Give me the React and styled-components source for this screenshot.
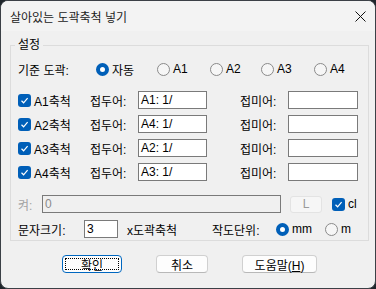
import React from 'react';
import styled, { createGlobalStyle } from 'styled-components';

const Global = createGlobalStyle`
  html, body { margin: 0; padding: 0; background: #1f252b; }
  body { width: 376px; height: 289px; overflow: hidden; }
  * { box-sizing: border-box; }
`;

const Window = styled.div`
  width: 376px;
  height: 289px;
  background: #f0f0f0;
  border: 1px solid #3b4046;
  border-radius: 8px;
  overflow: hidden;
  display: flex;
  flex-direction: column;
  font-family: "Liberation Sans", "Noto Sans CJK KR", sans-serif;
  font-size: 12px;
  color: #000;
`;

const TitleBar = styled.div`
  height: 30px;
  flex: none;
  background: #f3f3f3;
  display: flex;
  align-items: center;
  justify-content: space-between;
  padding: 0 9px 0 9px;
  color: #1a1a1a;
  font-size: 12px;
`;

const CloseBtn = styled.div`
  width: 12px;
  height: 12px;
  display: flex;
  align-items: center;
  justify-content: center;
`;

const Body = styled.div`
  padding: 7px 6px 0 9px;
  display: flex;
  flex-direction: column;
`;

const Group = styled.fieldset`
  margin: 0;
  padding: 0 0 1px 4px;
  border: 1px solid #dcdcdc;
  min-width: 0;
`;

const Legend = styled.legend`
  padding: 0 3px;
  line-height: 14px;
  font-size: 12px;
`;

const Content = styled.div`
  padding-left: 3px;
  display: flex;
  flex-direction: column;
`;

const RadioRow = styled.div`
  display: grid;
  grid-template-columns: 78px 61px 53px 51px 53px auto;
  align-items: center;
  height: 20px;
  margin-top: 7px;
`;

const CheckRows = styled.div`
  margin-top: 9px;
  display: flex;
  flex-direction: column;
`;

const CheckRow = styled.div`
  display: grid;
  grid-template-columns: 72px 48px 69px 33px 48px 70px;
  align-items: center;
  height: 24px;
`;

const Label = styled.span`
  white-space: nowrap;
  color: ${p => (p.$disabled ? '#a3a3a3' : '#000')};
`;

const Option = styled.label`
  display: flex;
  align-items: center;
  gap: 3px;
  white-space: nowrap;
`;

const RadioCircle = styled.span`
  flex: none;
  width: 13px;
  height: 13px;
  border-radius: 50%;
  background: ${p => (p.$checked ? '#fff' : '#f6f6f6')};
  border: ${p => (p.$checked ? '4px solid #005fb8' : '1px solid #8a8a8a')};
`;

const Box = styled.span`
  flex: none;
  width: 13px;
  height: 13px;
  border-radius: 3px;
  background: #005fb8;
  display: flex;
  align-items: center;
  justify-content: center;
`;

const Input = styled.div`
  height: 18px;
  width: ${p => p.$w}px;
  border: 1px solid #7a7a7a;
  background: ${p => (p.$disabled ? '#f0f0f0' : '#fff')};
  color: ${p => (p.$disabled ? '#8a8a8a' : '#000')};
  padding-left: 2px;
  line-height: 16px;
  font-size: 12px;
  white-space: nowrap;
`;

const FlexRow = styled.div`
  display: flex;
  align-items: center;
  height: 20px;
  margin-top: ${p => p.$mt}px;
`;

const Cell = styled.div`
  flex: none;
  width: ${p => p.$w}px;
  display: flex;
  align-items: center;
`;

const SmallButton = styled.div`
  width: 32px;
  height: 17px;
  border: 1px solid #e3e3e3;
  border-radius: 3px;
  background: #f6f6f6;
  color: #9a9a9a;
  display: flex;
  align-items: center;
  justify-content: center;
  font-size: 12px;
`;

const ButtonRow = styled.div`
  display: flex;
  gap: 34px;
  margin: 14px 0 0 52px;
`;

const Button = styled.div`
  position: relative;
  width: ${p => p.$w}px;
  height: 18px;
  border-radius: 4px;
  background: #fdfdfd;
  border: 1px solid ${p => (p.$focus ? '#0067c0' : '#d0d0d0')};
  border-bottom-color: ${p => (p.$focus ? '#0067c0' : '#b8b8b8')};
  display: flex;
  align-items: center;
  justify-content: center;
  font-size: 12px;
  color: #000;
`;

const FocusRing = styled.span`
  position: absolute;
  inset: 2px;
  border: 1px dotted #000;
  pointer-events: none;
`;

const U = styled.span`
  text-decoration: underline;
`;

const Check = () => (
  <Box>
    <svg width="9" height="9" viewBox="0 0 9 9">
      <path d="M1.5 4.8 L3.6 6.8 L7.6 2.2" fill="none" stroke="#fff" strokeWidth="1.2" />
    </svg>
  </Box>
);

const Radio = ({ checked, children }) => (
  <Option>
    <RadioCircle $checked={checked} />
    <span>{children}</span>
  </Option>
);

const scaleRows = [
  ['A1축척', 'A1: 1/'],
  ['A2축척', 'A4: 1/'],
  ['A3축척', 'A2: 1/'],
  ['A4축척', 'A3: 1/'],
];

export default function App() {
  return (
    <>
      <Global />
      <Window>
        <TitleBar>
          <span>살아있는 도곽축척 넣기</span>
          <CloseBtn>
            <svg width="11" height="11" viewBox="0 0 11 11">
              <path d="M0.5 0.5 L10.5 10.5 M10.5 0.5 L0.5 10.5" stroke="#111" strokeWidth="1" />
            </svg>
          </CloseBtn>
        </TitleBar>
        <Body>
          <Group>
            <Legend>설정</Legend>
            <Content>
              <RadioRow>
                <Label>기준 도곽:</Label>
                <Radio checked>자동</Radio>
                <Radio>A1</Radio>
                <Radio>A2</Radio>
                <Radio>A3</Radio>
                <Radio>A4</Radio>
              </RadioRow>
              <CheckRows>
                {scaleRows.map(([name, prefix]) => (
                  <CheckRow key={name}>
                    <Option>
                      <Check />
                      <span>{name}</span>
                    </Option>
                    <Label>접두어:</Label>
                    <Input $w={69}>{prefix}</Input>
                    <span />
                    <Label>접미어:</Label>
                    <Input $w={70} />
                  </CheckRow>
                ))}
              </CheckRows>
              <FlexRow $mt={10}>
                <Cell $w={24}>
                  <Label $disabled>켜:</Label>
                </Cell>
                <Cell $w={248}>
                  <Input $w={239} $disabled>0</Input>
                </Cell>
                <Cell $w={42}>
                  <SmallButton>L</SmallButton>
                </Cell>
                <Option>
                  <Check />
                  <span>cl</span>
                </Option>
              </FlexRow>
              <FlexRow $mt={5}>
                <Cell $w={66}>
                  <Label>문자크기:</Label>
                </Cell>
                <Cell $w={43}>
                  <Input $w={34}>3</Input>
                </Cell>
                <Cell $w={85}>
                  <Label>x도곽축척</Label>
                </Cell>
                <Cell $w={64}>
                  <Label>작도단위:</Label>
                </Cell>
                <Cell $w={49}>
                  <Radio checked>mm</Radio>
                </Cell>
                <Radio>m</Radio>
              </FlexRow>
            </Content>
          </Group>
          <ButtonRow>
            <Button $w={60} $focus>
              확인
              <FocusRing />
            </Button>
            <Button $w={52}>취소</Button>
            <Button $w={75}>
              <span>
                도움말(<U>H</U>)
              </span>
            </Button>
          </ButtonRow>
        </Body>
      </Window>
    </>
  );
}
